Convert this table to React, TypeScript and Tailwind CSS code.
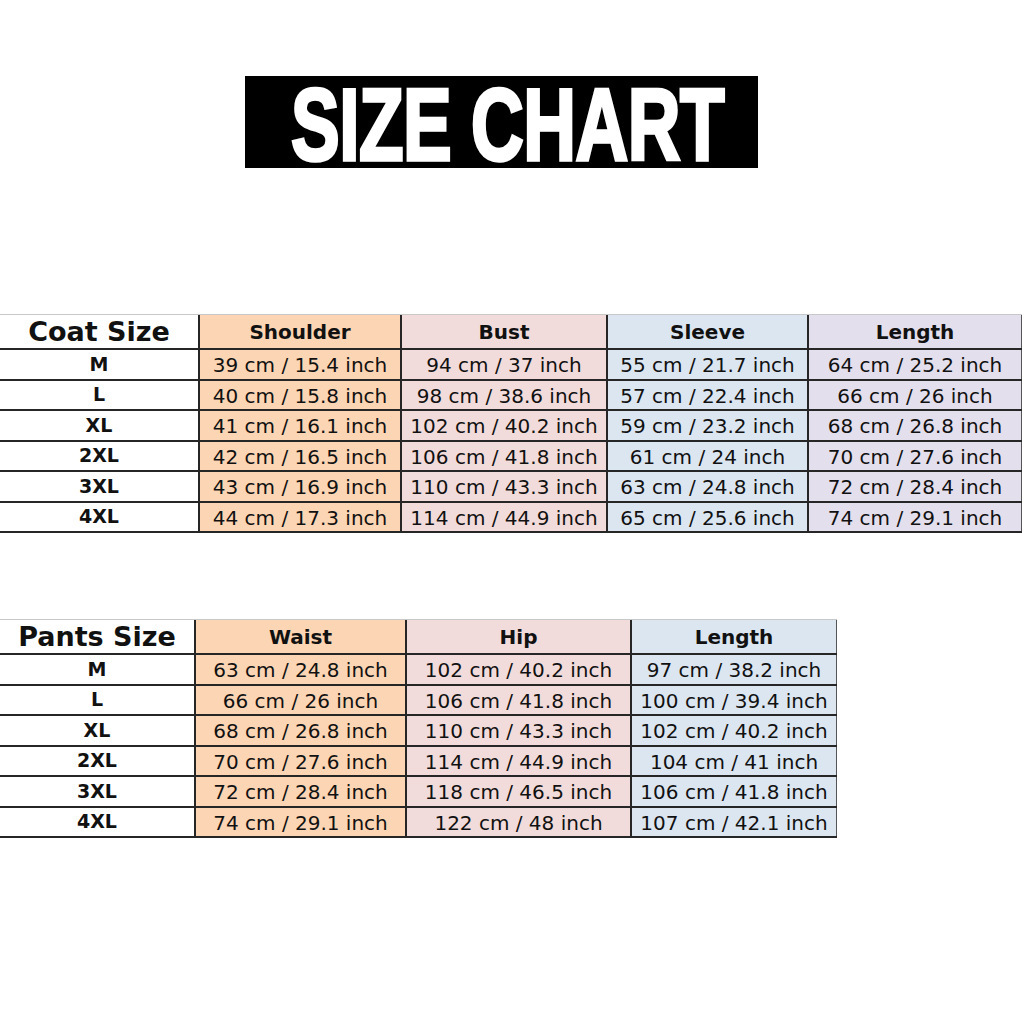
import React from 'react';

type Column = { label: string; width: number; bg: string };

interface SizeTable {
    title: string;
    titleWidth: number;
    columns: Column[];
    rows: { size: string; values: string[] }[];
}

const coatTable: SizeTable = {
    title: 'Coat Size',
    titleWidth: 200,
    columns: [
        { label: 'Shoulder', width: 202, bg: 'bg-[#fcd5b4]' },
        { label: 'Bust', width: 206, bg: 'bg-[#f2dcdb]' },
        { label: 'Sleeve', width: 201, bg: 'bg-[#dce6f1]' },
        { label: 'Length', width: 213, bg: 'bg-[#e4dfec]' },
    ],
    rows: [
        { size: 'M', values: ['39 cm / 15.4 inch', '94 cm / 37 inch', '55 cm / 21.7 inch', '64 cm / 25.2 inch'] },
        { size: 'L', values: ['40 cm / 15.8 inch', '98 cm / 38.6 inch', '57 cm / 22.4 inch', '66 cm / 26 inch'] },
        { size: 'XL', values: ['41 cm / 16.1 inch', '102 cm / 40.2 inch', '59 cm / 23.2 inch', '68 cm / 26.8 inch'] },
        { size: '2XL', values: ['42 cm / 16.5 inch', '106 cm / 41.8 inch', '61 cm / 24 inch', '70 cm / 27.6 inch'] },
        { size: '3XL', values: ['43 cm / 16.9 inch', '110 cm / 43.3 inch', '63 cm / 24.8 inch', '72 cm / 28.4 inch'] },
        { size: '4XL', values: ['44 cm / 17.3 inch', '114 cm / 44.9 inch', '65 cm / 25.6 inch', '74 cm / 29.1 inch'] },
    ],
};

const pantsTable: SizeTable = {
    title: 'Pants Size',
    titleWidth: 196,
    columns: [
        { label: 'Waist', width: 211, bg: 'bg-[#fcd5b4]' },
        { label: 'Hip', width: 225, bg: 'bg-[#f2dcdb]' },
        { label: 'Length', width: 205, bg: 'bg-[#dce6f1]' },
    ],
    rows: [
        { size: 'M', values: ['63 cm / 24.8 inch', '102 cm / 40.2 inch', '97 cm / 38.2 inch'] },
        { size: 'L', values: ['66 cm / 26 inch', '106 cm / 41.8 inch', '100 cm / 39.4 inch'] },
        { size: 'XL', values: ['68 cm / 26.8 inch', '110 cm / 43.3 inch', '102 cm / 40.2 inch'] },
        { size: '2XL', values: ['70 cm / 27.6 inch', '114 cm / 44.9 inch', '104 cm / 41 inch'] },
        { size: '3XL', values: ['72 cm / 28.4 inch', '118 cm / 46.5 inch', '106 cm / 41.8 inch'] },
        { size: '4XL', values: ['74 cm / 29.1 inch', '122 cm / 48 inch', '107 cm / 42.1 inch'] },
    ],
};

const Table: React.FC<{ data: SizeTable }> = ({ data }) => (
    <div className="flex flex-col w-fit border-t border-[#c8c8c8]">
        <div className="flex h-[35px] border-b-2 border-[#262626]">
            <div
                className="flex items-center justify-center text-[27px] font-bold leading-none border-r-2 border-[#262626]"
                style={{ width: data.titleWidth }}
            >
                {data.title}
            </div>
            {data.columns.map((c, i) => (
                <div
                    key={c.label}
                    className={`flex items-center justify-center text-[20px] font-bold leading-none ${c.bg} ${i === data.columns.length - 1 ? 'border-r border-[#555]' : 'border-r-2 border-[#262626]'}`}
                    style={{ width: c.width }}
                >
                    {c.label}
                </div>
            ))}
        </div>
        {data.rows.map((r) => (
            <div key={r.size} className="flex h-[30.5px] border-b-2 border-[#262626]">
                <div
                    className="flex items-center justify-center text-[19px] font-bold leading-none border-r-2 border-[#262626]"
                    style={{ width: data.titleWidth }}
                >
                    {r.size}
                </div>
                {r.values.map((v, i) => (
                    <div
                        key={i}
                        className={`flex items-center justify-center text-[20px] leading-none pt-[2px] ${data.columns[i].bg} ${i === r.values.length - 1 ? 'border-r border-[#555]' : 'border-r-2 border-[#262626]'}`}
                        style={{ width: data.columns[i].width }}
                    >
                        {v}
                    </div>
                ))}
            </div>
        ))}
    </div>
);

export default function App() {
    return (
        <div className="w-[1024px] h-[1024px] bg-white text-[#111] font-['DejaVu_Sans',sans-serif] overflow-hidden">
            <div className="pt-[76px] pl-[245px]">
                <div className="w-[513px] h-[92px] bg-black flex items-center justify-center">
                    <span className="inline-block text-white font-['Liberation_Sans',sans-serif] font-bold text-[73px] leading-none tracking-[-0.5px] scale-y-[1.4] [-webkit-text-stroke:2.5px_white] translate-x-[6px] translate-y-[2px]">
                        SIZE CHART
                    </span>
                </div>
            </div>
            <div className="mt-[146px]">
                <Table data={coatTable} />
            </div>
            <div className="mt-[86px]">
                <Table data={pantsTable} />
            </div>
        </div>
    );
}
